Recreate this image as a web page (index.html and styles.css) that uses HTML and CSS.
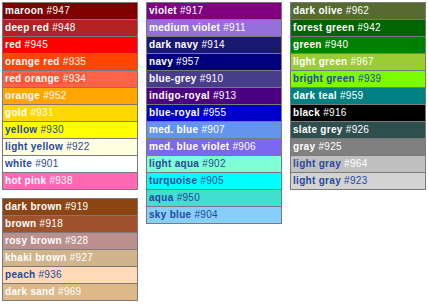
FILE: index.html
```html
<!DOCTYPE html>
<html>
<head>
<meta charset="utf-8">
<link rel="stylesheet" href="styles.css">
</head>
<body>
<div class="page">
  <div class="col">
    <div class="box">
      <div class="row" style="background:#800000"><b>maroon</b> #947</div>
      <div class="row" style="background:#b22222"><b>deep red</b> #948</div>
      <div class="row" style="background:#ff0000"><b>red</b> #945</div>
      <div class="row" style="background:#ff4500"><b>orange red</b> #935</div>
      <div class="row" style="background:#ff6347"><span class="hl"><b>red orange</b> #934</span></div>
      <div class="row" style="background:#ffa500"><b>orange</b> #952</div>
      <div class="row" style="background:#ffd700"><b>gold</b> #931</div>
      <div class="row dark" style="background:#ffff00"><b>yellow</b> #930</div>
      <div class="row dark" style="background:#ffffe0"><b>light yellow</b> #922</div>
      <div class="row dark" style="background:#ffffff"><b>white</b> #901</div>
      <div class="row" style="background:#ff69b4"><b>hot pink</b> #938</div>
    </div>
    <div class="box">
      <div class="row" style="background:#8b4513"><b>dark brown</b> #919</div>
      <div class="row" style="background:#a0522d"><b>brown</b> #918</div>
      <div class="row" style="background:#bc8f8f"><b>rosy brown</b> #928</div>
      <div class="row" style="background:#d2b48c"><b>khaki brown</b> #927</div>
      <div class="row dark" style="background:#ffdab9"><b>peach</b> #936</div>
      <div class="row" style="background:#deb887"><b>dark sand</b> #969</div>
    </div>
  </div>
  <div class="col">
    <div class="box">
      <div class="row" style="background:#800080"><b>violet</b> #917</div>
      <div class="row" style="background:#9370db"><b>medium violet</b> #911</div>
      <div class="row" style="background:#191970"><b>dark navy</b> #914</div>
      <div class="row" style="background:#000080"><b>navy</b> #957</div>
      <div class="row" style="background:#483d8b"><b>blue-grey</b> #910</div>
      <div class="row" style="background:#4b0082"><b>indigo-royal</b> #913</div>
      <div class="row" style="background:#0000cd"><b>blue-royal</b> #955</div>
      <div class="row" style="background:#6495ed"><b>med. blue</b> #907</div>
      <div class="row" style="background:#7b68ee"><b>med. blue violet</b> #906</div>
      <div class="row dark" style="background:#7fffd4"><b>light aqua</b> #902</div>
      <div class="row dark" style="background:#00ffff"><b>turquoise</b> #905</div>
      <div class="row dark" style="background:#40e0d0"><b>aqua</b> #950</div>
      <div class="row dark" style="background:#87cefa"><b>sky blue</b> #904</div>
    </div>
  </div>
  <div class="col">
    <div class="box">
      <div class="row" style="background:#556b2f"><b>dark olive</b> #962</div>
      <div class="row" style="background:#006400"><b>forest green</b> #942</div>
      <div class="row" style="background:#008000"><b>green</b> #940</div>
      <div class="row" style="background:#9acd32"><b>light green</b> #967</div>
      <div class="row dark" style="background:#7cfc00"><b>bright green</b> #939</div>
      <div class="row" style="background:#008080"><b>dark teal</b> #959</div>
      <div class="row" style="background:#000000"><b>black</b> #916</div>
      <div class="row" style="background:#2f4f4f"><b>slate grey</b> #926</div>
      <div class="row" style="background:#808080"><b>gray</b> #925</div>
      <div class="row" style="background:#c0c0c0"><b class="dk">light gray</b> #964</div>
      <div class="row dark" style="background:#d3d3d3"><b>light gray</b> #923</div>
    </div>
  </div>
</div>
</body>
</html>
```
FILE: styles.css
```css
html, body {
  margin: 0;
  padding: 0;
  background: #ffffff;
}
.page {
  display: flex;
  gap: 8px;
  padding: 2px;
  align-items: flex-start;
}
.col {
  display: flex;
  flex-direction: column;
  gap: 8px;
}
.box {
  width: 134px;
  border: 1px solid #7a7a7a;
}
.row {
  height: 16px;
  line-height: 16px;
  padding-left: 2px;
  font-family: "Liberation Sans", Arial, sans-serif;
  font-size: 10px;
  letter-spacing: 0.3px;
  color: #ffffff;
  white-space: nowrap;
  overflow: hidden;
}
.row + .row {
  border-top: 1px solid #7a7a7a;
}
.row b {
  font-weight: bold;
}
.dark {
  color: #26489a;
}
.dk {
  color: #26489a;
}
.hl {
  background: #f45a38;
}
```
